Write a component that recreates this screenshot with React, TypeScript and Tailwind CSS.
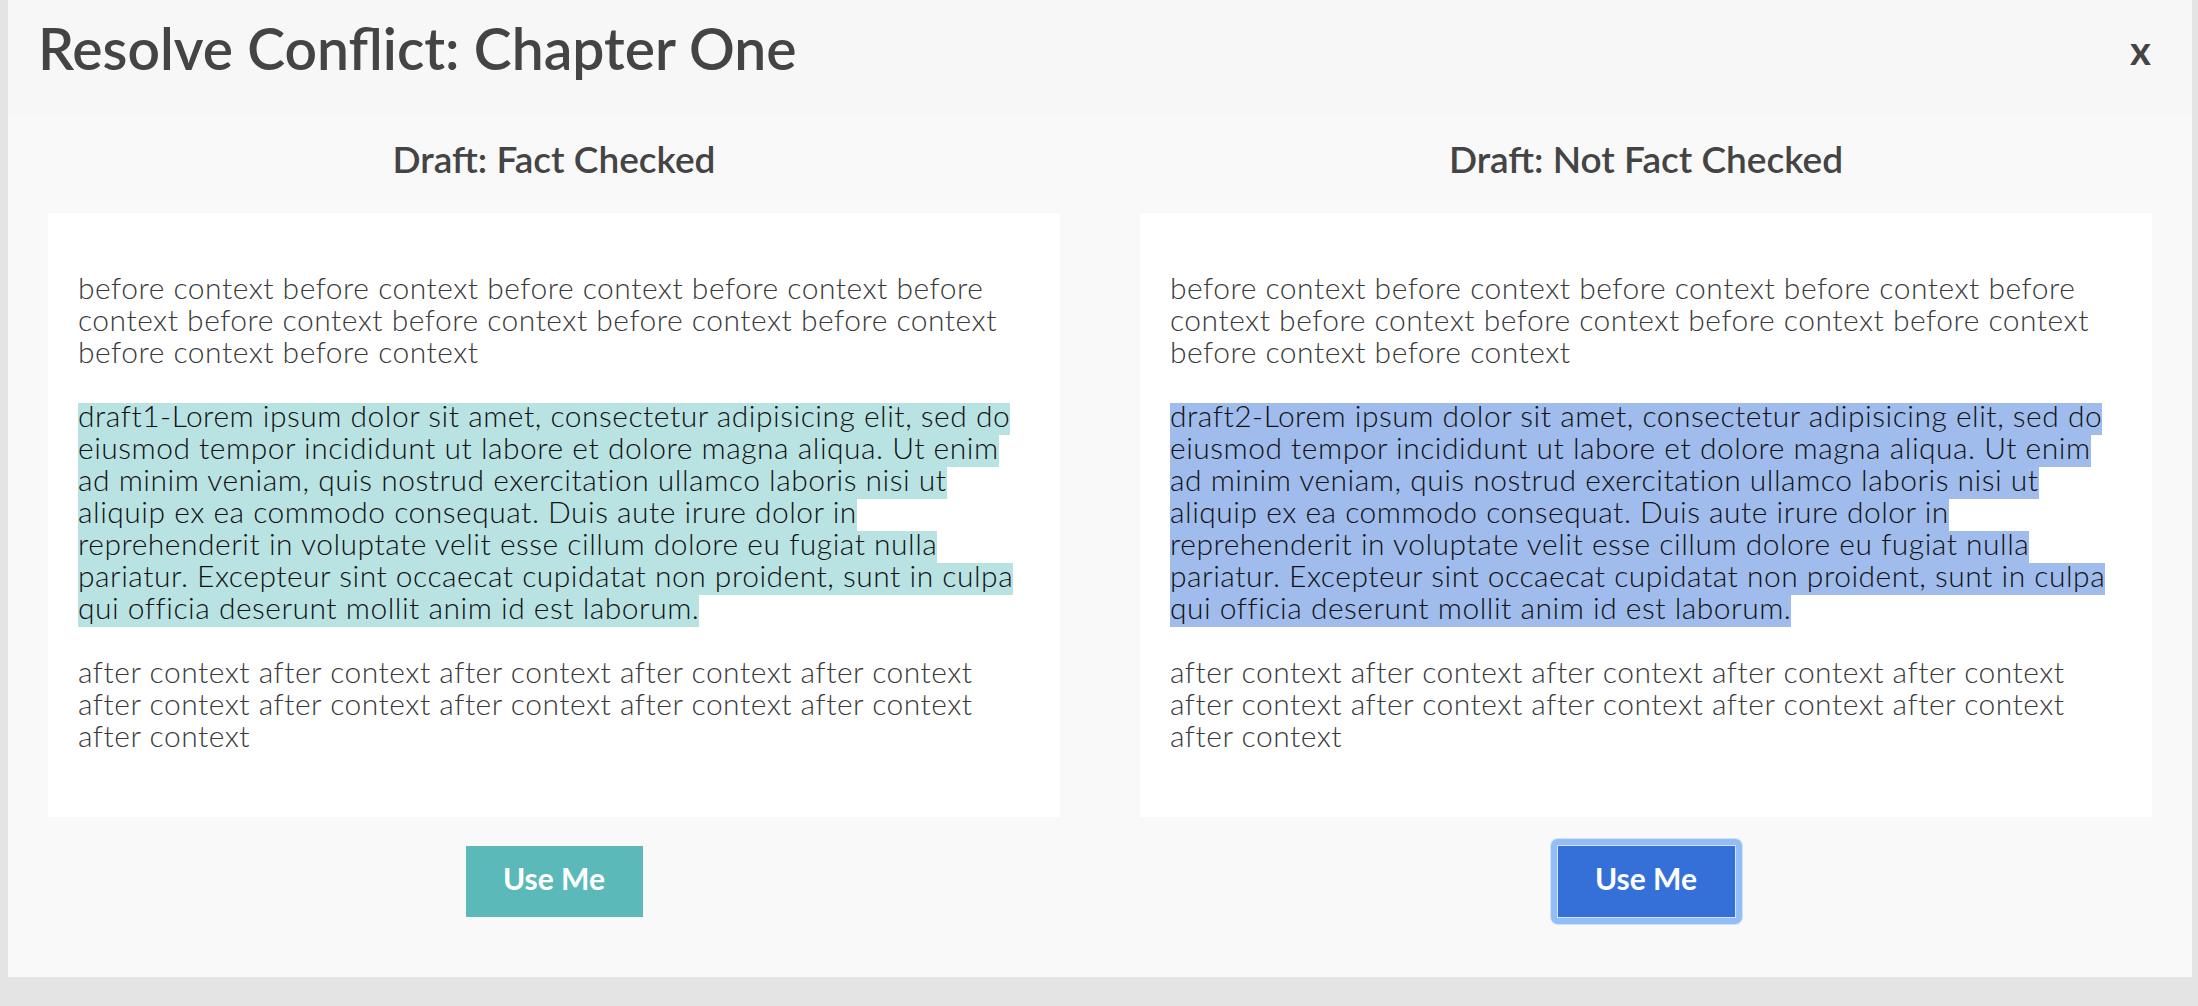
import React from 'react';

const before = [
  'before context before context before context before context before',
  'context before context before context before context before context',
  'before context before context',
];

const after = [
  'after context after context after context after context after context',
  'after context after context after context after context after context',
  'after context',
];

const draftLines = (n: number) => [
  `draft${n}-Lorem ipsum dolor sit amet, consectetur adipisicing elit, sed do`,
  'eiusmod tempor incididunt ut labore et dolore magna aliqua. Ut enim',
  'ad minim veniam, quis nostrud exercitation ullamco laboris nisi ut',
  'aliquip ex ea commodo consequat. Duis aute irure dolor in',
  'reprehenderit in voluptate velit esse cillum dolore eu fugiat nulla',
  'pariatur. Excepteur sint occaecat cupidatat non proident, sunt in culpa',
  'qui officia deserunt mollit anim id est laborum.',
];

const Line = ({ text, mark }: { text: string; mark?: string }) => (
  <div className={`h-[32px] w-fit whitespace-pre leading-[25px] ${mark ?? 'text-[#3a3a3a]'}`}>{text}</div>
);

const Column = ({
  title,
  draft,
  markClass,
  buttonClass,
  ringClass,
}: {
  title: string;
  draft: number;
  markClass: string;
  buttonClass: string;
  ringClass: string;
}) => (
  <div className="flex flex-col items-center px-[40px] pb-[53px]">
    <h2 className="mt-[24px] h-[40px] text-[37px] leading-[40px] font-semibold text-[#444]">{title}</h2>

    {/* draft text */}
    <div className="mt-[34px] w-full bg-white px-[30px] py-[62px] text-[30px] font-light tracking-[0.5px]">
      {before.map((t, i) => (
        <Line key={i} text={t} />
      ))}
      <div className="mt-[32px]">
        {draftLines(draft).map((t, i) => (
          <Line key={i} text={t} mark={markClass} />
        ))}
      </div>
      <div className="mt-[32px]">
        {after.map((t, i) => (
          <Line key={i} text={t} />
        ))}
      </div>
    </div>

    <div className={`mt-[22px] rounded-[7px] ${ringClass}`}>
      <button
        className={`flex items-center justify-center pb-[8px] text-[30px] leading-none font-bold text-white ${buttonClass}`}
      >
        Use Me
      </button>
    </div>
  </div>
);

export default function App() {
  return (
    <div className="h-screen w-full overflow-hidden bg-[#e4e4e4] font-['Lato',sans-serif]">
      <div className="ml-[8px] w-[2184px] bg-[#f9f9f9]">
        {/* header */}
        <div className="flex h-[115px] items-start justify-between bg-[#f7f7f7] pr-[41px] pl-[30px]">
          <h1 className="mt-[20px] text-[57px] leading-none font-semibold text-[#444]">
            Resolve Conflict: Chapter One
          </h1>
          <button className="mt-[30px] text-[40px] leading-none font-bold text-[#444]">x</button>
        </div>

        <div className="grid grid-cols-2">
          <Column
            title="Draft: Fact Checked"
            draft={1}
            markClass="bg-[#b9e3e3] text-[#111]"
            buttonClass="h-[71px] w-[177px] bg-[#5bbab9]"
            ringClass="bg-transparent p-[7px]"
          />
          <Column
            title="Draft: Not Fact Checked"
            draft={2}
            markClass="bg-[#a0bcec] text-[#111]"
            buttonClass="h-[73px] w-[179px] border border-[#d3e3fb] bg-[#3470d8]"
            ringClass="bg-[#93bdf7] p-[6px] shadow-[0_0_0_1px_#cfe1fb]"
          />
        </div>
      </div>
    </div>
  );
}
